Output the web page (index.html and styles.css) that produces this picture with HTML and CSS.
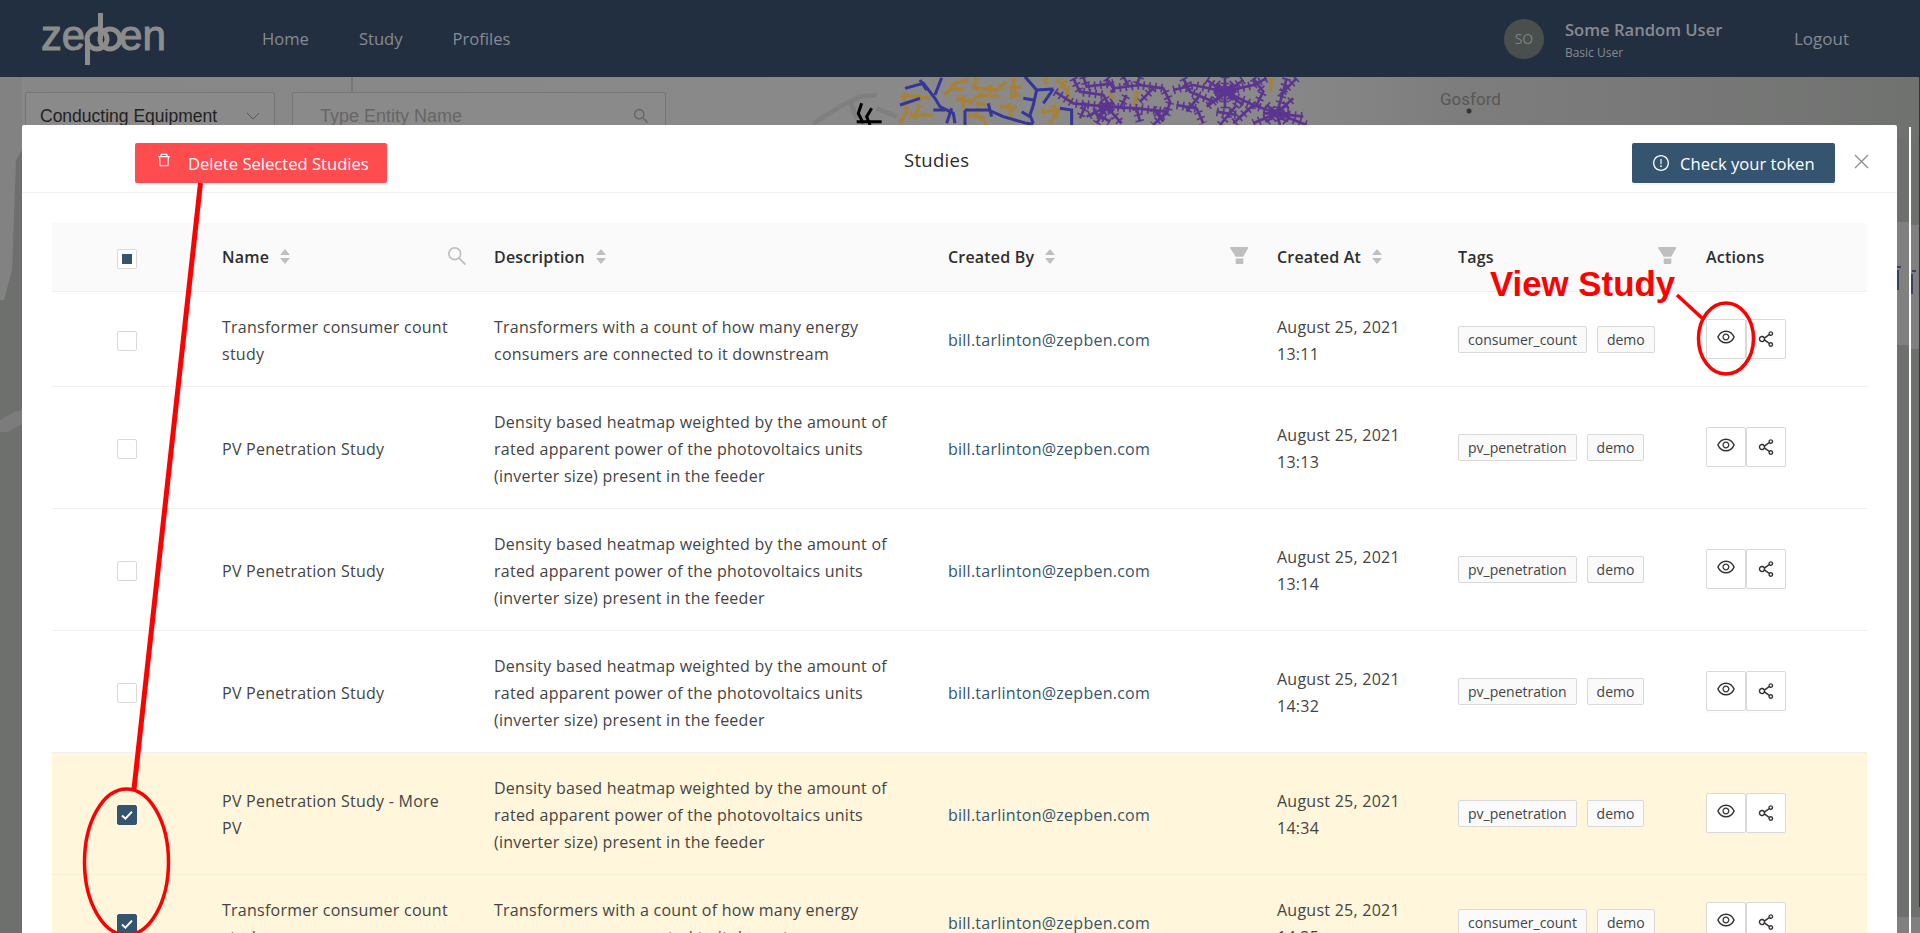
FILE: index.html
```html
<!DOCTYPE html>
<html lang="en">
<head>
    <meta charset="UTF-8">
    <title>Studies</title>
    <link rel="stylesheet" href="styles.css">
</head>
<body>
    <svg class="icon-defs" width="0" height="0">
        <symbol id="i-eye" viewBox="64 64 896 896"><path d="M942.2 486.2C847.4 286.5 704.1 186 512 186c-192.2 0-335.4 100.5-430.2 300.3a60.3 60.3 0 0 0 0 51.5C176.6 737.5 319.9 838 512 838c192.2 0 335.4-100.5 430.2-300.3 7.7-16.2 7.7-35 0-51.5zM512 766c-161.3 0-279.4-81.8-362.7-254C232.6 339.8 350.7 258 512 258c161.3 0 279.4 81.8 362.7 254C791.5 684.2 673.4 766 512 766zm-4-430c-97.2 0-176 78.8-176 176s78.8 176 176 176 176-78.8 176-176-78.8-176-176-176zm0 288c-61.9 0-112-50.1-112-112s50.1-112 112-112 112 50.1 112 112-50.1 112-112 112z"/></symbol>
        <symbol id="i-share" viewBox="64 64 896 896"><path d="M752 664c-28.5 0-54.8 10-75.4 26.7L469.4 540.8a160.68 160.68 0 0 0 0-57.6l207.2-149.9C697.2 350 723.5 360 752 360c66.2 0 120-53.8 120-120s-53.8-120-120-120-120 53.8-120 120c0 11.6 1.6 22.7 4.7 33.3L439.9 415.8C410.7 377.1 364.3 352 312 352c-88.4 0-160 71.6-160 160s71.6 160 160 160c52.3 0 98.7-25.1 127.9-63.8l196.8 142.5c-3.1 10.6-4.7 21.8-4.7 33.3 0 66.2 53.8 120 120 120s120-53.8 120-120-53.8-120-120-120zm0-476c28.7 0 52 23.3 52 52s-23.3 52-52 52-52-23.3-52-52 23.3-52 52-52zM312 600c-48.5 0-88-39.5-88-88s39.5-88 88-88 88 39.5 88 88-39.5 88-88 88zm440 236c-28.7 0-52-23.3-52-52s23.3-52 52-52 52 23.3 52 52-23.3 52-52 52z"/></symbol>
        <symbol id="i-search" viewBox="64 64 896 896"><path d="M909.6 854.5L649.9 594.8C690.2 542.7 712 479 712 412c0-80.2-31.3-155.4-87.9-212.1-56.6-56.7-132-87.9-212.1-87.9s-155.5 31.3-212.1 87.9C143.2 256.5 112 331.8 112 412c0 80.1 31.3 155.5 87.9 212.1C256.5 680.8 331.8 712 412 712c67 0 130.6-21.9 182.7-62l259.7 259.6a8.2 8.2 0 0 0 11.6 0l43.6-43.5a8.2 8.2 0 0 0 0-11.6zM570.4 570.4C528 612.7 471.8 636 412 636s-116-23.3-158.4-65.6C211.3 528 188 471.8 188 412s23.3-116.1 65.6-158.4C296 211.3 352.2 188 412 188s116.1 23.2 158.4 65.6S636 352.2 636 412s-23.3 116.1-65.6 158.4z"/></symbol>
        <symbol id="i-filter" viewBox="64 64 896 896"><path d="M349 838c0 17.7 14.2 32 31.9 32h262.2c17.7 0 31.9-14.3 31.9-32V642H349v196zm531.1-684H143.9c-24.5 0-39.8 26.7-27.5 48L352 564h320l207.6-362c12.1-21.3-3.2-48-27.5-48z"/></symbol>
        <symbol id="i-trash" viewBox="64 64 896 896"><path d="M360 184h-8c4.4 0 8-3.6 8-8v8h304v-8c0 4.4 3.6 8 8 8h-8v72h72v-80c0-35.3-28.7-64-64-64H352c-35.3 0-64 28.7-64 64v80h72v-72zm504 72H160c-17.7 0-32 14.3-32 32v32c0 4.4 3.6 8 8 8h60.4l24.7 523c1.6 34.1 29.8 61 63.9 61h454c34.2 0 62.3-26.8 63.9-61l24.7-523H888c4.4 0 8-3.6 8-8v-32c0-17.7-14.3-32-32-32zM731.3 840H292.7l-24.2-512h487l-24.2 512z"/></symbol>
        <symbol id="i-alert" viewBox="64 64 896 896"><path d="M512 64C264.6 64 64 264.6 64 512s200.6 448 448 448 448-200.6 448-448S759.4 64 512 64zm0 820c-205.4 0-372-166.6-372-372s166.6-372 372-372 372 166.6 372 372-166.6 372-372 372z"/><path d="M464 688a48 48 0 1 0 96 0 48 48 0 1 0-96 0zm24-112h48c4.4 0 8-3.6 8-8V296c0-4.4-3.6-8-8-8h-48c-4.4 0-8 3.6-8 8v272c0 4.4 3.6 8 8 8z"/></symbol>
        <symbol id="i-sort" viewBox="0 0 10 15"><path d="M5 0l5 6H0zM5 15L0 9h10z"/></symbol>
        <symbol id="i-check" viewBox="0 0 14 14"><path d="M2 7.5l3.4 3.2L12 3.6" fill="none" stroke="#fff" stroke-width="2"/></symbol>
    </svg>

    <header class="topbar">
        <svg class="logo" width="126" height="52" viewBox="0 0 126 52">
            <text class="logo-text" x="0" y="37" textLength="44" lengthAdjust="spacingAndGlyphs">ze</text>
            <text class="logo-text" x="78" y="37" textLength="47" lengthAdjust="spacingAndGlyphs">en</text>
            <g fill="none" stroke="#8c8c8c" stroke-width="5">
                <circle cx="56" cy="26" r="10"/>
                <circle cx="69" cy="26" r="10"/>
                <path d="M46.500 26V52M59.500 0V26"/>
            </g>
        </svg>
        <nav class="nav">
            <a class="nav-link">Home</a>
            <a class="nav-link">Study</a>
            <a class="nav-link">Profiles</a>
        </nav>
        <div class="user">
            <span class="avatar">SO</span>
            <div class="user-info">
                <div class="user-name">Some Random User</div>
                <div class="user-role">Basic User</div>
            </div>
            <a class="logout">Logout</a>
        </div>
    </header>

    <main class="workspace">
        <svg class="map" width="1920" height="856" viewBox="0 77 1920 856">
            <defs>
                <linearGradient id="land" x1="0" x2="1" y1="0" y2="0">
                    <stop offset="0" stop-color="#878787"/>
                    <stop offset="0.65" stop-color="#8a8a8a"/>
                    <stop offset="0.76" stop-color="#7d7d7d"/>
                    <stop offset="1" stop-color="#707270"/>
                </linearGradient>
                <g id="net-orange" fill="none">
                    <path d="M250 60L330 70M250 60L260 110 240 145M270 120H340M300 90L280 130M255 85L300 70"/>
                    <path d="M375 60L405 25 445 15M395 40L430 45M470 10L460 40 530 45 560 20M500 45L515 30"/>
                    <path d="M580 10L585 70M570 40L605 35M570 65L600 60M410 70L450 80 480 60 540 65M430 60V100M470 85L500 90"/>
                    <path d="M445 120L490 130 500 150M540 95L590 100M565 85L575 125M480 100L465 125"/>
                    <path d="M675 10L680 30M710 15L740 40 750 80M735 15L725 40M665 110L720 105 690 145M700 90L710 130"/>
                    <path d="M950 50L945 90M1355 10L1350 50M870 55L880 75"/>
                </g>
                <g id="net-purple" fill="none">
                    <path d="M705 50L760 85 860 95 950 100 1040 110M760 10L780 50 850 60 870 95M790 5L800 35 880 25M860 95L830 145M860 95L905 145M800 85L780 130M860 95L800 125"/>
                    <path d="M860 10L880 40 960 30 1030 40 1050 80 1040 120M910 5L925 30M960 5L950 30M1000 40L960 80M1040 110L1000 150M950 100L960 140M900 100L920 60M820 110L870 140M1000 100L1030 140"/>
                    <path d="M1060 45L1120 30 1215 50 1300 90 1370 115M1090 10L1110 50 1180 80 1215 50M1215 5V100M1160 15L1270 90M1270 15L1160 95M1215 50L1300 30 1340 10M1140 60L1100 110M1070 90L1130 100 1150 145"/>
                    <path d="M1300 10L1330 50 1310 90M1400 10L1390 50 1370 115M1430 10L1380 60M1300 90L1240 145M1370 115L1300 145M1370 115L1450 125M1370 115L1420 70M1370 115L1380 150M1370 115L1460 150M1250 90L1200 150M1190 110L1250 120"/>
                    <path d="M1190 25L1240 75M1240 25L1190 75M1185 50H1250M1340 90L1400 140M1400 90L1340 140M1330 115H1410M840 80L880 110M880 80L840 110"/>
                </g>
            </defs>
            <rect x="0" y="77" width="1920" height="856" fill="#6e706e"/>
            <rect x="0" y="77" width="1920" height="60" fill="url(#land)"/>
            <path d="M0 77H22V150L16 160 12 270 4 300H0z" fill="#828282"/>
            <path d="M0 420L14 412 22 410V424L8 432H0z" fill="#7c7c7c"/>
            <rect x="1897" y="222" width="12" height="123" fill="#808080"/>
            <rect x="1911" y="225" width="8" height="124" fill="#808080"/>
            <rect x="1897" y="917" width="23" height="16" fill="#808080"/>
            <rect x="1909" y="127" width="2" height="806" fill="#fff"/>
            <rect x="1919" y="77" width="1" height="830" fill="#333"/>
            <path d="M352 77V92" stroke="#666" stroke-width="1"/>
            <path d="M1897 267h4M1898 270v20M1912 271h4M1912 274v20" stroke="#1f2f55" stroke-width="1.500"/>
            <text class="map-label" x="1440" y="105">Gosford</text>
            <circle cx="1469" cy="111" r="2.500" fill="#333"/>
            <g transform="translate(820 75) scale(.3333)" fill="none" stroke-linejoin="miter">
                <g stroke="#7f7f7f" stroke-width="14">
                    <path d="M-20 145L60 95 120 65 170 60M90 80L110 130M170 100L230 125"/>
                </g>
                <g stroke="#000" stroke-width="9">
                    <path d="M125 85L115 115 130 145M155 100L140 125 150 150M110 140H185"/>
                </g>
                <g stroke="#a5813c">
                    <use href="#net-orange" stroke-width="10"/>
                    <use href="#net-orange" stroke-width="20" stroke-dasharray="5 34"/>
                </g>
                <g stroke="#35359a" stroke-width="9" fill="none">
                    <path d="M255 40L310 25 345 70 360 95 400 115 405 145M365 8L345 60M300 15L320 45M240 90L300 70"/>
                    <path d="M340 105H375M435 105H505L550 125 620 145 640 148M435 105V150M505 85L515 125M395 100L380 145"/>
                    <path d="M615 5L650 45 640 90 630 120 640 145M650 45L700 42M610 70L640 75M700 42L670 85M605 110L630 125"/>
                    <path d="M720 100L755 105V150"/>
                </g>
                <g stroke="#5c3590">
                    <use href="#net-purple" stroke-width="8"/>
                    <use href="#net-purple" stroke-width="26" stroke-dasharray="5 13"/>
                </g>
            </g>
        </svg>

        <div class="map-controls">
            <div class="field field-select">
                <span>Conducting Equipment</span>
                <svg class="chevron" width="14" height="8" viewBox="0 0 14 8"><path d="M1 1l6 6 6-6" fill="none" stroke="#555" stroke-width="1"/></svg>
            </div>
            <div class="field field-search">
                <span>Type Entity Name</span>
                <svg width="16" height="16"><use href="#i-search"/></svg>
            </div>
        </div>

        <section class="modal">
            <div class="modal-header">
                <button class="btn btn-danger"><svg width="14" height="14"><use href="#i-trash"/></svg><span>Delete Selected Studies</span></button>
                <div class="modal-title">Studies</div>
                <button class="btn btn-primary"><svg width="16" height="16"><use href="#i-alert"/></svg><span>Check your token</span></button>
                <svg class="modal-close" width="15" height="15" viewBox="0 0 15 15"><path d="M1 1l13 13M14 1L1 14" stroke="#8c8c8c" stroke-width="1.300"/></svg>
            </div>
            <div class="modal-body">
                <table class="studies">
                    <colgroup>
                        <col class="col-check"><col class="col-name"><col class="col-desc"><col class="col-by"><col class="col-at"><col class="col-tags"><col class="col-actions">
                    </colgroup>
                    <thead>
                        <tr>
                            <th class="cell-check"><span class="checkbox partial"></span></th>
                            <th><div class="th-inner"><span>Name</span><svg class="sort" width="10" height="15"><use href="#i-sort"/></svg><svg class="th-tool tool-search" width="20" height="20"><use href="#i-search"/></svg></div></th>
                            <th><div class="th-inner"><span>Description</span><svg class="sort" width="10" height="15"><use href="#i-sort"/></svg></div></th>
                            <th><div class="th-inner"><span>Created By</span><svg class="sort" width="10" height="15"><use href="#i-sort"/></svg><svg class="th-tool tool-filter-by" width="21" height="21"><use href="#i-filter"/></svg></div></th>
                            <th><div class="th-inner"><span>Created At</span><svg class="sort" width="10" height="15"><use href="#i-sort"/></svg></div></th>
                            <th><div class="th-inner"><span>Tags</span><svg class="th-tool tool-filter-tags" width="21" height="21"><use href="#i-filter"/></svg></div></th>
                            <th><div class="th-inner"><span>Actions</span></div></th>
                        </tr>
                    </thead>
                    <tbody>
                        <tr>
                            <td class="cell-check"><span class="checkbox"></span></td>
                            <td>Transformer consumer count study</td>
                            <td>Transformers with a count of how many energy consumers are connected to it downstream</td>
                            <td><a class="email">bill.tarlinton@zepben.com</a></td>
                            <td>August 25, 2021 13:11</td>
                            <td class="cell-tags"><span class="tag">consumer_count</span><span class="tag">demo</span></td>
                            <td class="cell-actions"><button class="icon-btn"><svg class="eye" width="18" height="18"><use href="#i-eye"/></svg></button><button class="icon-btn"><svg width="18" height="18"><use href="#i-share"/></svg></button></td>
                        </tr>
                        <tr>
                            <td class="cell-check"><span class="checkbox"></span></td>
                            <td>PV Penetration Study</td>
                            <td>Density based heatmap weighted by the amount of rated apparent power of the photovoltaics units (inverter size) present in the feeder</td>
                            <td><a class="email">bill.tarlinton@zepben.com</a></td>
                            <td>August 25, 2021 13:13</td>
                            <td class="cell-tags"><span class="tag">pv_penetration</span><span class="tag">demo</span></td>
                            <td class="cell-actions"><button class="icon-btn"><svg class="eye" width="18" height="18"><use href="#i-eye"/></svg></button><button class="icon-btn"><svg width="18" height="18"><use href="#i-share"/></svg></button></td>
                        </tr>
                        <tr>
                            <td class="cell-check"><span class="checkbox"></span></td>
                            <td>PV Penetration Study</td>
                            <td>Density based heatmap weighted by the amount of rated apparent power of the photovoltaics units (inverter size) present in the feeder</td>
                            <td><a class="email">bill.tarlinton@zepben.com</a></td>
                            <td>August 25, 2021 13:14</td>
                            <td class="cell-tags"><span class="tag">pv_penetration</span><span class="tag">demo</span></td>
                            <td class="cell-actions"><button class="icon-btn"><svg class="eye" width="18" height="18"><use href="#i-eye"/></svg></button><button class="icon-btn"><svg width="18" height="18"><use href="#i-share"/></svg></button></td>
                        </tr>
                        <tr>
                            <td class="cell-check"><span class="checkbox"></span></td>
                            <td>PV Penetration Study</td>
                            <td>Density based heatmap weighted by the amount of rated apparent power of the photovoltaics units (inverter size) present in the feeder</td>
                            <td><a class="email">bill.tarlinton@zepben.com</a></td>
                            <td>August 25, 2021 14:32</td>
                            <td class="cell-tags"><span class="tag">pv_penetration</span><span class="tag">demo</span></td>
                            <td class="cell-actions"><button class="icon-btn"><svg class="eye" width="18" height="18"><use href="#i-eye"/></svg></button><button class="icon-btn"><svg width="18" height="18"><use href="#i-share"/></svg></button></td>
                        </tr>
                        <tr class="selected">
                            <td class="cell-check"><span class="checkbox checked"><svg width="14" height="14"><use href="#i-check"/></svg></span></td>
                            <td>PV Penetration Study - More PV</td>
                            <td>Density based heatmap weighted by the amount of rated apparent power of the photovoltaics units (inverter size) present in the feeder</td>
                            <td><a class="email">bill.tarlinton@zepben.com</a></td>
                            <td>August 25, 2021 14:34</td>
                            <td class="cell-tags"><span class="tag">pv_penetration</span><span class="tag">demo</span></td>
                            <td class="cell-actions"><button class="icon-btn"><svg class="eye" width="18" height="18"><use href="#i-eye"/></svg></button><button class="icon-btn"><svg width="18" height="18"><use href="#i-share"/></svg></button></td>
                        </tr>
                        <tr class="selected">
                            <td class="cell-check"><span class="checkbox checked"><svg width="14" height="14"><use href="#i-check"/></svg></span></td>
                            <td>Transformer consumer count study</td>
                            <td>Transformers with a count of how many energy consumers are connected to it downstream</td>
                            <td><a class="email">bill.tarlinton@zepben.com</a></td>
                            <td>August 25, 2021 14:35</td>
                            <td class="cell-tags"><span class="tag">consumer_count</span><span class="tag">demo</span></td>
                            <td class="cell-actions"><button class="icon-btn"><svg class="eye" width="18" height="18"><use href="#i-eye"/></svg></button><button class="icon-btn"><svg width="18" height="18"><use href="#i-share"/></svg></button></td>
                        </tr>
                    </tbody>
                </table>
            </div>
        </section>

        <!-- red markup drawn on top of the screenshot -->
        <svg class="markup" width="1920" height="856" viewBox="0 77 1920 856">
            <g fill="none" stroke="#f00">
                <path d="M200.500 183L134 789" stroke-width="5"/>
                <ellipse cx="126.500" cy="862" rx="42" ry="73" stroke-width="3.500"/>
                <path d="M1677 295L1702 318" stroke-width="3.500"/>
                <ellipse cx="1726" cy="338.500" rx="27.500" ry="35.500" stroke-width="3.500"/>
            </g>
            <text class="markup-text" x="1490" y="296">View Study</text>
        </svg>
    </main>
</body>
</html>
```

FILE: styles.css
```css
* {
    margin: 0;
    padding: 0;
    box-sizing: border-box;
}
html, body {
    height: 100%;
}
body {
    font-family: 'Open Sans', 'Noto Sans', sans-serif;
    font-size: 16px;
    color: #444;
    overflow: hidden;
    background: #6e706e;
}
button {
    font-family: inherit;
    cursor: pointer;
}
.icon-defs {
    position: absolute;
}
svg use {
    fill: currentColor;
}

/* top bar */
.topbar {
    height: 77px;
    background: #222f40;
    display: flex;
    align-items: center;
    padding: 0 71px 0 41px;
    position: relative;
    z-index: 3;
}
.logo-text {
    font-family: 'Liberation Sans', sans-serif;
    font-size: 42px;
    fill: #8c8c8c;
    stroke: #8c8c8c;
    stroke-width: 1px;
}
.nav {
    display: flex;
    gap: 50px;
    margin-left: 95px;
}
.nav-link {
    color: #878b90;
    font-size: 16.600px;
}
.user {
    margin-left: auto;
    display: flex;
    align-items: center;
}
.avatar {
    width: 40px;
    height: 40px;
    border-radius: 50%;
    background: #484f4d;
    color: #7d8080;
    display: flex;
    align-items: center;
    justify-content: center;
    font-size: 14px;
}
.user-info {
    margin-left: 21px;
    width: 229px;
    padding-top: 2px;
}
.user-name {
    color: #878b90;
    font-size: 16.600px;
    font-weight: 600;
    line-height: 22px;
}
.user-role {
    color: #878b90;
    font-size: 12px;
    line-height: 16px;
    margin-top: 4px;
}
.logout {
    color: #878b90;
    font-size: 17px;
}

/* map behind the dialog */
.workspace {
    position: relative;
    height: 856px;
    overflow: hidden;
}
.map {
    position: absolute;
    top: 0;
    left: 0;
}
.map-label {
    font-family: 'Roboto', sans-serif;
    font-size: 17px;
    fill: #575757;
}
.map-controls {
    position: relative;
    display: flex;
    gap: 17px;
    padding: 15px 0 0 25px;
}
.field {
    height: 46px;
    background: #8a8a8a;
    border: 1px solid #767676;
    border-radius: 2px;
    display: flex;
    align-items: center;
    font-family: 'Liberation Sans', sans-serif;
    font-size: 18px;
    padding-top: 2px;
}
.field-select {
    width: 250px;
    padding-left: 14px;
    color: #222;
    font-size: 17.500px;
}
.chevron {
    margin-left: 29px;
}
.field-search {
    width: 374px;
    padding-left: 27px;
    color: #666;
}
.field-search svg {
    margin-left: auto;
    margin-right: 16px;
    color: #666;
}

/* dialog */
.modal {
    position: absolute;
    top: 48px;
    left: 22px;
    width: 1875px;
    background: #fff;
    border-radius: 2px;
}
.modal-header {
    height: 68px;
    padding-top: 18px;
    border-bottom: 1px solid #f0f0f0;
    display: flex;
    align-items: flex-start;
}
.btn {
    height: 40px;
    border: none;
    border-radius: 2px;
    color: #fff;
    font-size: 16.600px;
    display: inline-flex;
    align-items: center;
    box-shadow: 0 2px 0 rgba(0, 0, 0, 0.04);
}
.btn-danger {
    width: 252px;
    margin-left: 113px;
    padding-left: 22px;
    background: #ff4d4f;
}
.btn-danger span {
    margin-left: 17px;
}
.btn-danger svg {
    margin-top: -6px;
}
.btn-primary {
    width: 203px;
    margin-left: auto;
    padding-left: 21px;
    background: #34546f;
}
.btn-primary span {
    margin-left: 11px;
}
.modal-title {
    position: absolute;
    left: 882px;
    top: 22px;
    font-size: 18.500px;
    letter-spacing: 0.3px;
    color: #2b2b2b;
}
.modal-close {
    margin: 11px 28px 0 19px;
}
.modal-body {
    padding: 30px 30px 0;
}

/* table */
.studies {
    width: 1815px;
    table-layout: fixed;
    border-collapse: collapse;
}
.col-check { width: 154px; }
.col-name { width: 272px; }
.col-desc { width: 454px; }
.col-by { width: 329px; }
.col-at { width: 181px; }
.col-tags { width: 248px; }
.col-actions { width: 177px; }
.studies th {
    height: 68px;
    background: #fafafa;
    border-bottom: 1px solid #f0f0f0;
    padding: 0 16px;
    text-align: left;
    font-weight: 600;
    letter-spacing: 0.2px;
    color: #2e2e2e;
}
.th-inner {
    position: relative;
    display: flex;
    align-items: center;
}
.sort {
    margin-left: 11px;
    color: #bfbfbf;
}
.th-tool {
    position: absolute;
    color: #bfbfbf;
}
.tool-search {
    left: 225px;
    top: 0;
}
.tool-filter-by {
    left: 281px;
    top: -1px;
}
.tool-filter-tags {
    left: 199px;
    top: -1px;
}
.studies td {
    padding: 22px 16px 18px;
    line-height: 27px;
    letter-spacing: 0.25px;
    border-bottom: 1px solid #f0f0f0;
    vertical-align: middle;
}
.studies td.cell-tags,
.studies td.cell-actions {
    padding: 20px 16px;
}
.studies th.cell-check,
.studies td.cell-check {
    padding: 0 0 0 65px;
}
.selected td {
    background: #fff6db;
    border-bottom-color: #f7eed3;
}
.checkbox {
    display: inline-flex;
    width: 20px;
    height: 20px;
    margin-top: 2px;
    background: #fff;
    border: 1px solid #d9d9d9;
    border-radius: 2px;
    align-items: center;
    justify-content: center;
    vertical-align: middle;
}
.checkbox.partial::after {
    content: "";
    width: 10px;
    height: 10px;
    background: #34546f;
}
.checkbox.checked {
    background: #34546f;
    border-color: #34546f;
}
.email {
    color: #34546f;
}
.tag {
    display: inline-block;
    height: 27px;
    line-height: 25px;
    padding: 0 9px;
    margin-right: 10px;
    font-size: 14px;
    letter-spacing: 0;
    background: #fafafa;
    border: 1px solid #d9d9d9;
    border-radius: 2px;
    vertical-align: middle;
}
.cell-actions {
    white-space: nowrap;
}
.icon-btn {
    width: 40px;
    height: 40px;
    background: #fff;
    border: 1px solid #d9d9d9;
    border-radius: 2px;
    color: #333;
    display: inline-flex;
    align-items: center;
    justify-content: center;
    vertical-align: middle;
    box-shadow: 0 2px 0 rgba(0, 0, 0, 0.015);
}
.eye {
    margin-bottom: 4px;
}

/* red markup */
.markup {
    position: absolute;
    top: 0;
    left: 0;
    pointer-events: none;
}
.markup-text {
    font-family: 'Liberation Sans', sans-serif;
    font-size: 34.800px;
    font-weight: 700;
    fill: #f00;
}
```
